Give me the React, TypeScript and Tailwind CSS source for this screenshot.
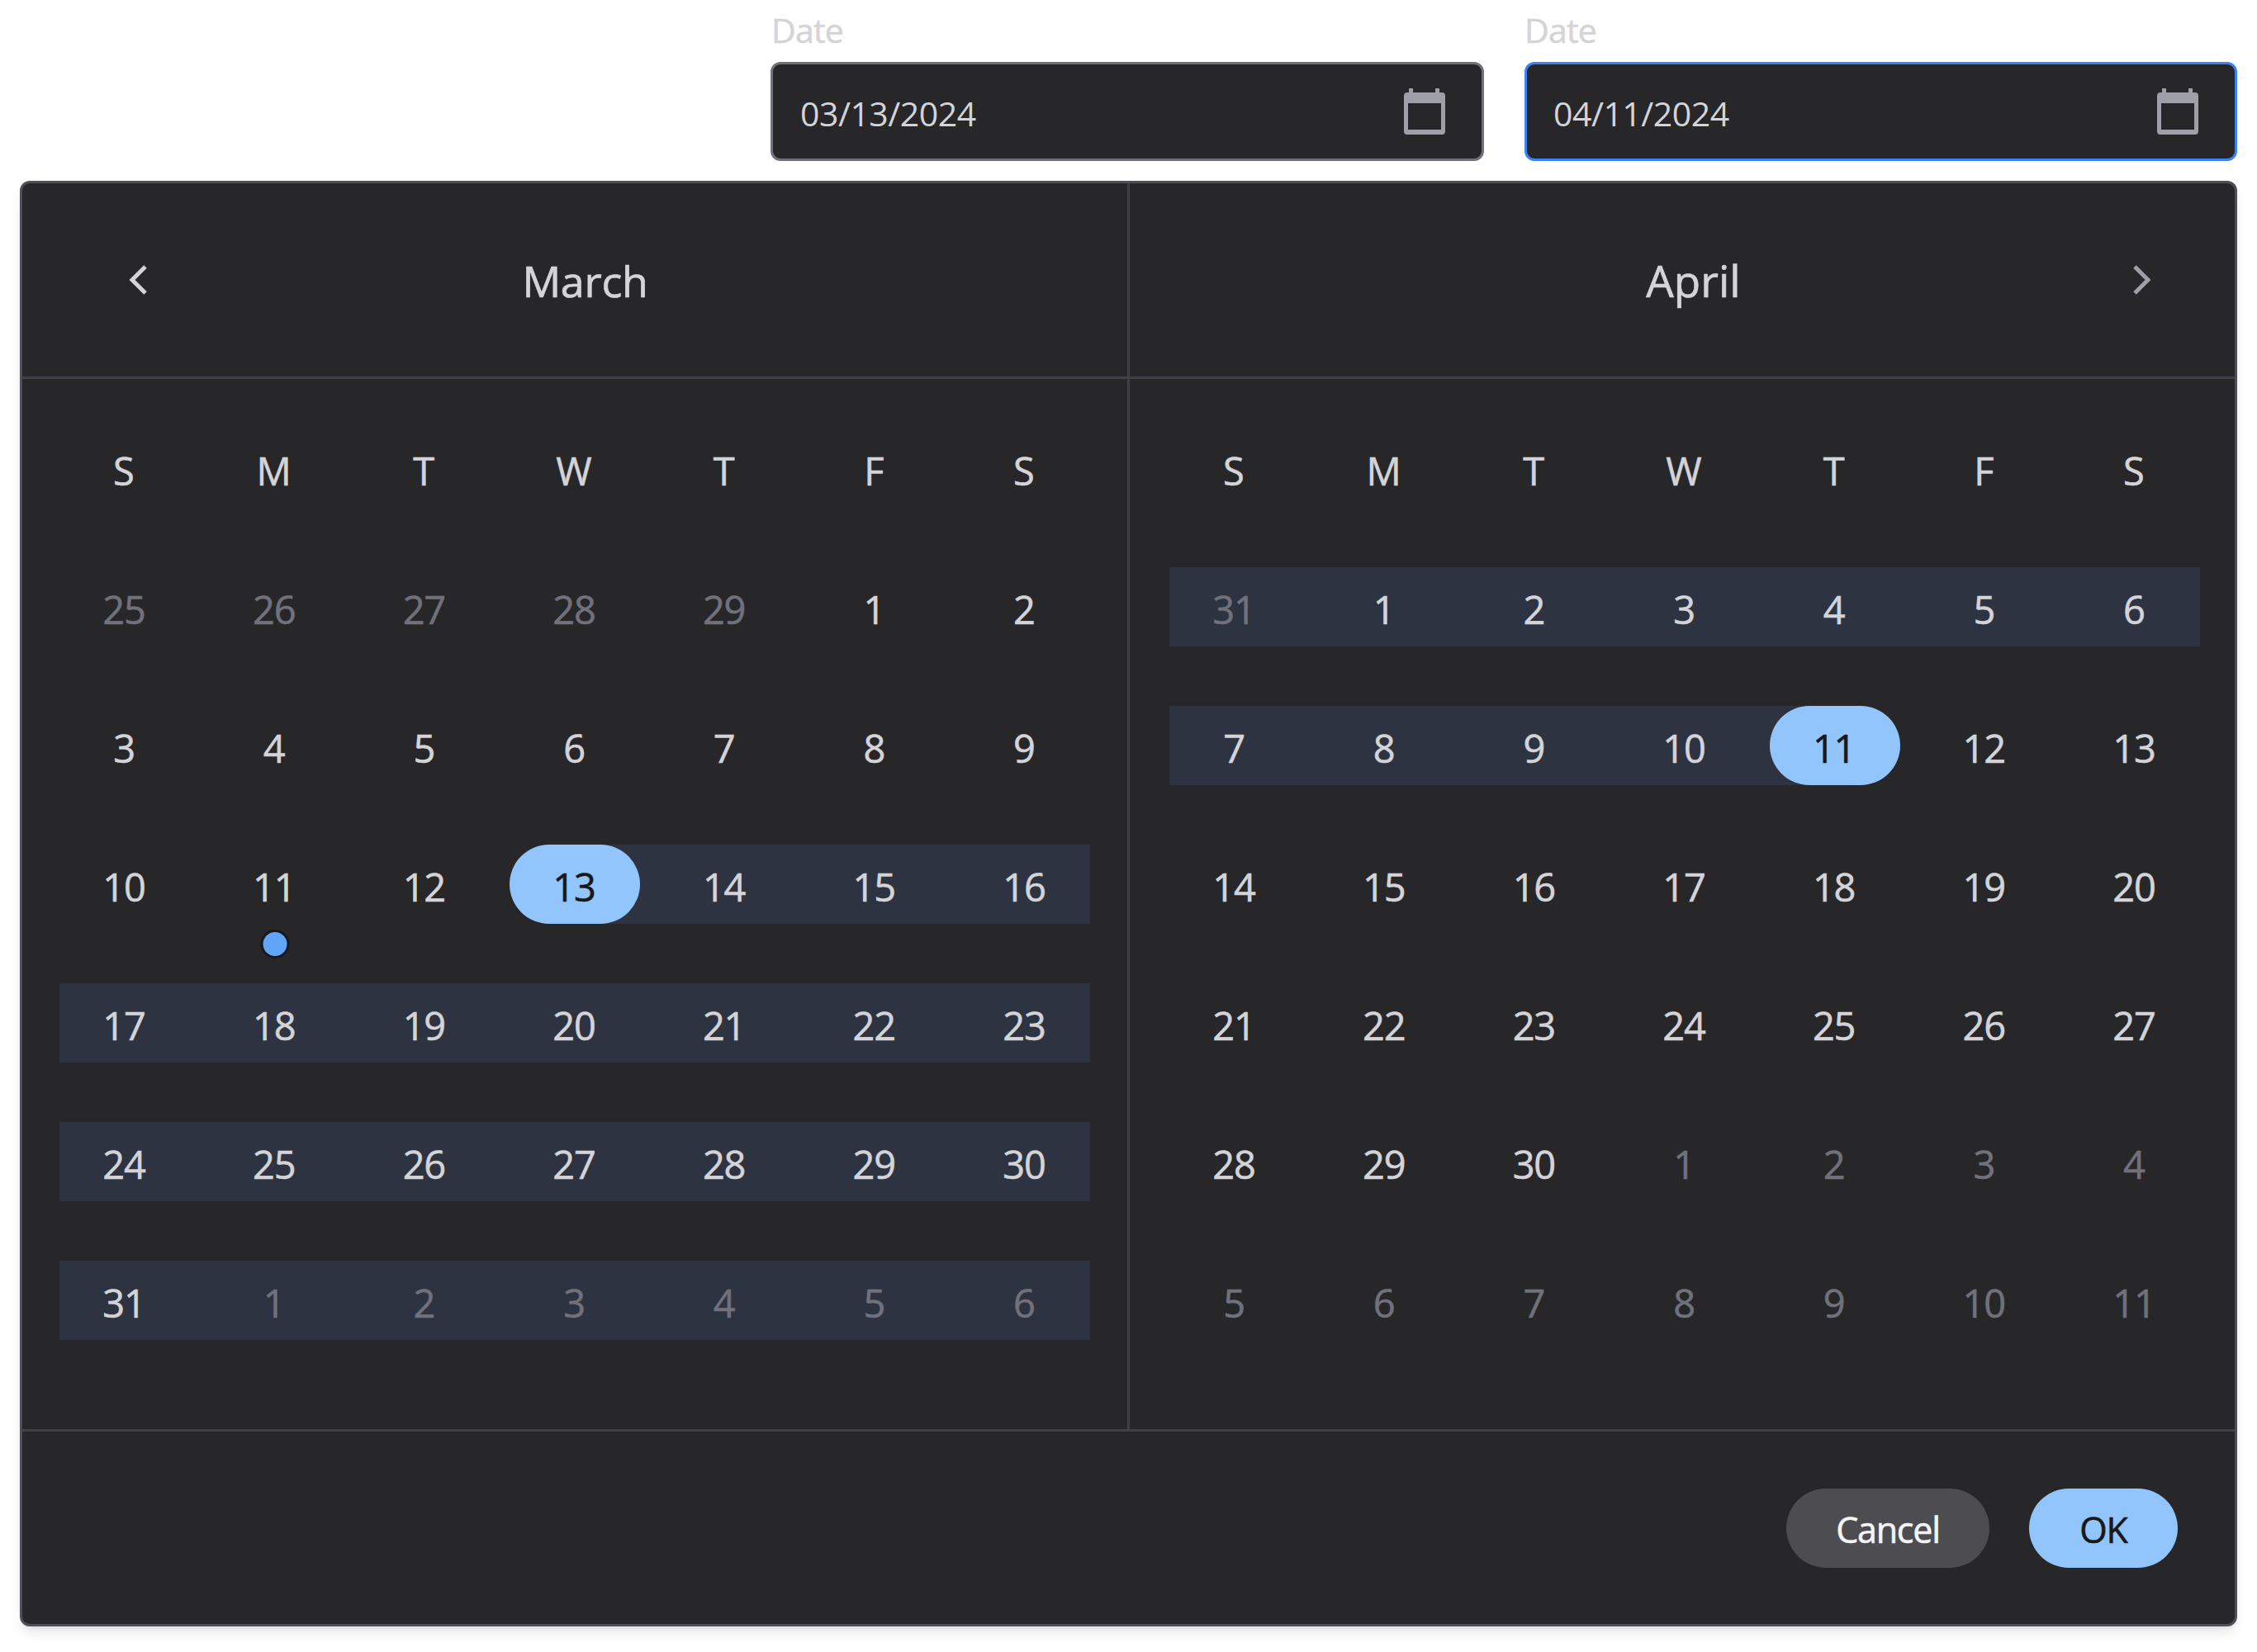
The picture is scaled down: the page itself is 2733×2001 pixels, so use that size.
type Band = "none" | "full" | "start" | "end";

type Day = {
	label: string;
	muted?: boolean;
	selected?: boolean;
	band?: Band;
	today?: boolean;
};

const weekDays: Array<string> = ["S", "M", "T", "W", "T", "F", "S"];

const toDays = (
	labels: Array<number>,
	muted: (index: number) => boolean,
	band: (index: number) => Band,
	selected: number,
	today?: number,
): Array<Day> =>
	labels.map((n, index) => ({
		label: String(n),
		muted: muted(index),
		band: band(index),
		selected: index === selected,
		today: index === today,
	}));

const marchLabels: Array<number> = [
	25, 26, 27, 28, 29, 1, 2, 3, 4, 5, 6, 7, 8, 9, 10, 11, 12, 13, 14, 15, 16, 17, 18, 19, 20, 21, 22, 23, 24, 25, 26, 27,
	28, 29, 30, 31, 1, 2, 3, 4, 5, 6,
];

const aprilLabels: Array<number> = [
	31, 1, 2, 3, 4, 5, 6, 7, 8, 9, 10, 11, 12, 13, 14, 15, 16, 17, 18, 19, 20, 21, 22, 23, 24, 25, 26, 27, 28, 29, 30, 1,
	2, 3, 4, 5, 6, 7, 8, 9, 10, 11,
];

const marchDays = toDays(
	marchLabels,
	(i) => i < 5 || i > 35,
	(i) => (i === 17 ? "start" : i > 17 ? "full" : "none"),
	17,
	15,
);

const aprilDays = toDays(
	aprilLabels,
	(i) => i === 0 || i > 30,
	(i) => (i === 11 ? "end" : i < 11 ? "full" : "none"),
	11,
);

const CalendarIcon = () => (
	<svg width="50" height="56" viewBox="0 0 50 56" className="shrink-0 text-zinc-400">
		<path
			fill="currentColor"
			fillRule="evenodd"
			d="M6 0h5v5h27V0h5v5h3a4 4 0 0 1 4 4v43a4 4 0 0 1-4 4H4a4 4 0 0 1-4-4V9a4 4 0 0 1 4-4h2V0ZM5 18v32h40V18H5Z"
		/>
	</svg>
);

const DateField = ({ value, width, focused }: { value: string; width: string; focused?: boolean }) => (
	<div className={width}>
		<div
			className={`mb-[18px] text-[41px] leading-[42px] tracking-[-0.8px] text-zinc-300 [-webkit-text-stroke:0.5px_currentColor] ${
				focused ? "pl-0" : "pl-[1px]"
			}`}
		>
			Date
		</div>
		<div
			className={`flex h-[120px] items-center justify-between rounded-xl border-[3px] bg-zinc-800 pr-[44px] ${
				focused ? "border-[#3b82f6] pl-[32px]" : "border-zinc-500 pl-[33px]"
			}`}
		>
			<span className="pt-[6px] text-[41px] tracking-[-0.5px] text-zinc-300">{value}</span>
			<CalendarIcon />
		</div>
	</div>
);

const Chevron = ({ points, className }: { points: string; className: string }) => (
	<svg width="23" height="36" viewBox="0 0 23 36" fill="none" className={`shrink-0 ${className}`}>
		<polyline points={points} stroke="currentColor" strokeWidth="5" />
	</svg>
);

const DayCell = ({ day, column }: { day: Day; column: number }) => {
	const gap = column > 0 ? "pl-[23.67px]" : "";
	let wrapperBand = "";
	let innerBand = "";
	if (day.band === "full") wrapperBand = "bg-[#2d3340]";
	if (day.band === "start") innerBand = "bg-linear-to-r from-transparent from-50% to-[#2d3340] to-50%";
	if (day.band === "end") wrapperBand = "bg-linear-to-r from-[#2d3340] from-[102px] to-transparent to-[102px]";

	return (
		<div className={`${gap} ${wrapperBand}`}>
			<div className={`relative h-[96px] ${innerBand}`}>
				<div
					className={`flex h-full items-center justify-center rounded-[48px] pr-[2px] pt-[6px] text-[47px] tracking-[-1.2px] [-webkit-text-stroke:0.6px_currentColor] ${
						day.selected ? "bg-[#93c5fd] text-zinc-900" : day.muted ? "text-zinc-500" : "text-zinc-300"
					}`}
				>
					{day.label}
				</div>
				{day.today && (
					<span className="absolute left-1/2 top-[103px] size-[35px] -translate-x-1/2 rounded-full border-[3px] border-zinc-900 bg-[#60a5fa]" />
				)}
			</div>
		</div>
	);
};

const MonthGrid = ({ days, className }: { days: Array<Day>; className: string }) => (
	<div className={`grid grid-cols-[158px_repeat(6,181.67px)] gap-y-[72px] pb-[108px] pt-[60px] ${className}`}>
		{weekDays.map((letter, index) => (
			<div key={index} className={index > 0 ? "pl-[23.67px]" : ""}>
				<div className="flex h-[96px] items-center justify-center pr-[2px] pt-[6px] text-[47px] text-zinc-300 [-webkit-text-stroke:0.6px_currentColor]">
					{letter}
				</div>
			</div>
		))}
		{days.map((day, index) => (
			<DayCell key={index} day={day} column={index % 7} />
		))}
	</div>
);

export default function App() {
	return (
		<div className="min-h-[2001px] bg-white px-[24px] pt-[15px] font-['Open_Sans',sans-serif]">
			<div className="flex justify-end gap-[49px]">
				<DateField value="03/13/2024" width="w-[864px]" />
				<DateField value="04/11/2024" width="w-[863px]" focused />
			</div>

			<div className="mt-[24px] overflow-hidden rounded-xl border-[3px] border-[#4f4f57] bg-zinc-800 shadow-lg">
				<div className="flex">
					<div className="w-[1338px]">
						<div className="flex h-[234px] items-center pl-[129px] pr-[127px] text-zinc-300">
							<Chevron points="20,2 4,18 20,34" className="text-zinc-300" />
							<div className="flex-1 pt-[2px] text-center text-[52px] tracking-[-0.3px] [-webkit-text-stroke:0.7px_currentColor]">
								March
							</div>
						</div>
						<div className="h-[3px] bg-zinc-700" />
						<MonthGrid days={marchDays} className="pl-[45px]" />
					</div>
					<div className="w-[3px] bg-zinc-700" />
					<div className="w-[1338px]">
						<div className="flex h-[234px] items-center pl-[151px] pr-[101px] text-zinc-300">
							<div className="flex-1 pt-[2px] text-center text-[53px] [-webkit-text-stroke:0.7px_currentColor]">April</div>
							<Chevron points="3,2 19,18 3,34" className="text-zinc-400" />
						</div>
						<div className="h-[3px] bg-zinc-700" />
						<MonthGrid days={aprilDays} className="pl-[48px]" />
					</div>
				</div>

				<div className="h-[3px] bg-zinc-700" />
				<div className="flex h-[233px] items-center justify-end gap-[48px] pr-[69px] text-[43px] tracking-[-1.2px] [-webkit-text-stroke:0.6px_currentColor]">
					<button className="flex h-[96px] w-[246px] items-center justify-center rounded-[48px] bg-[#4c4c51] pt-[6px] text-zinc-100">
						Cancel
					</button>
					<button className="flex h-[96px] w-[180px] items-center justify-center rounded-[48px] bg-[#93c5fd] pt-[6px] text-zinc-900">
						OK
					</button>
				</div>
			</div>
		</div>
	);
}
